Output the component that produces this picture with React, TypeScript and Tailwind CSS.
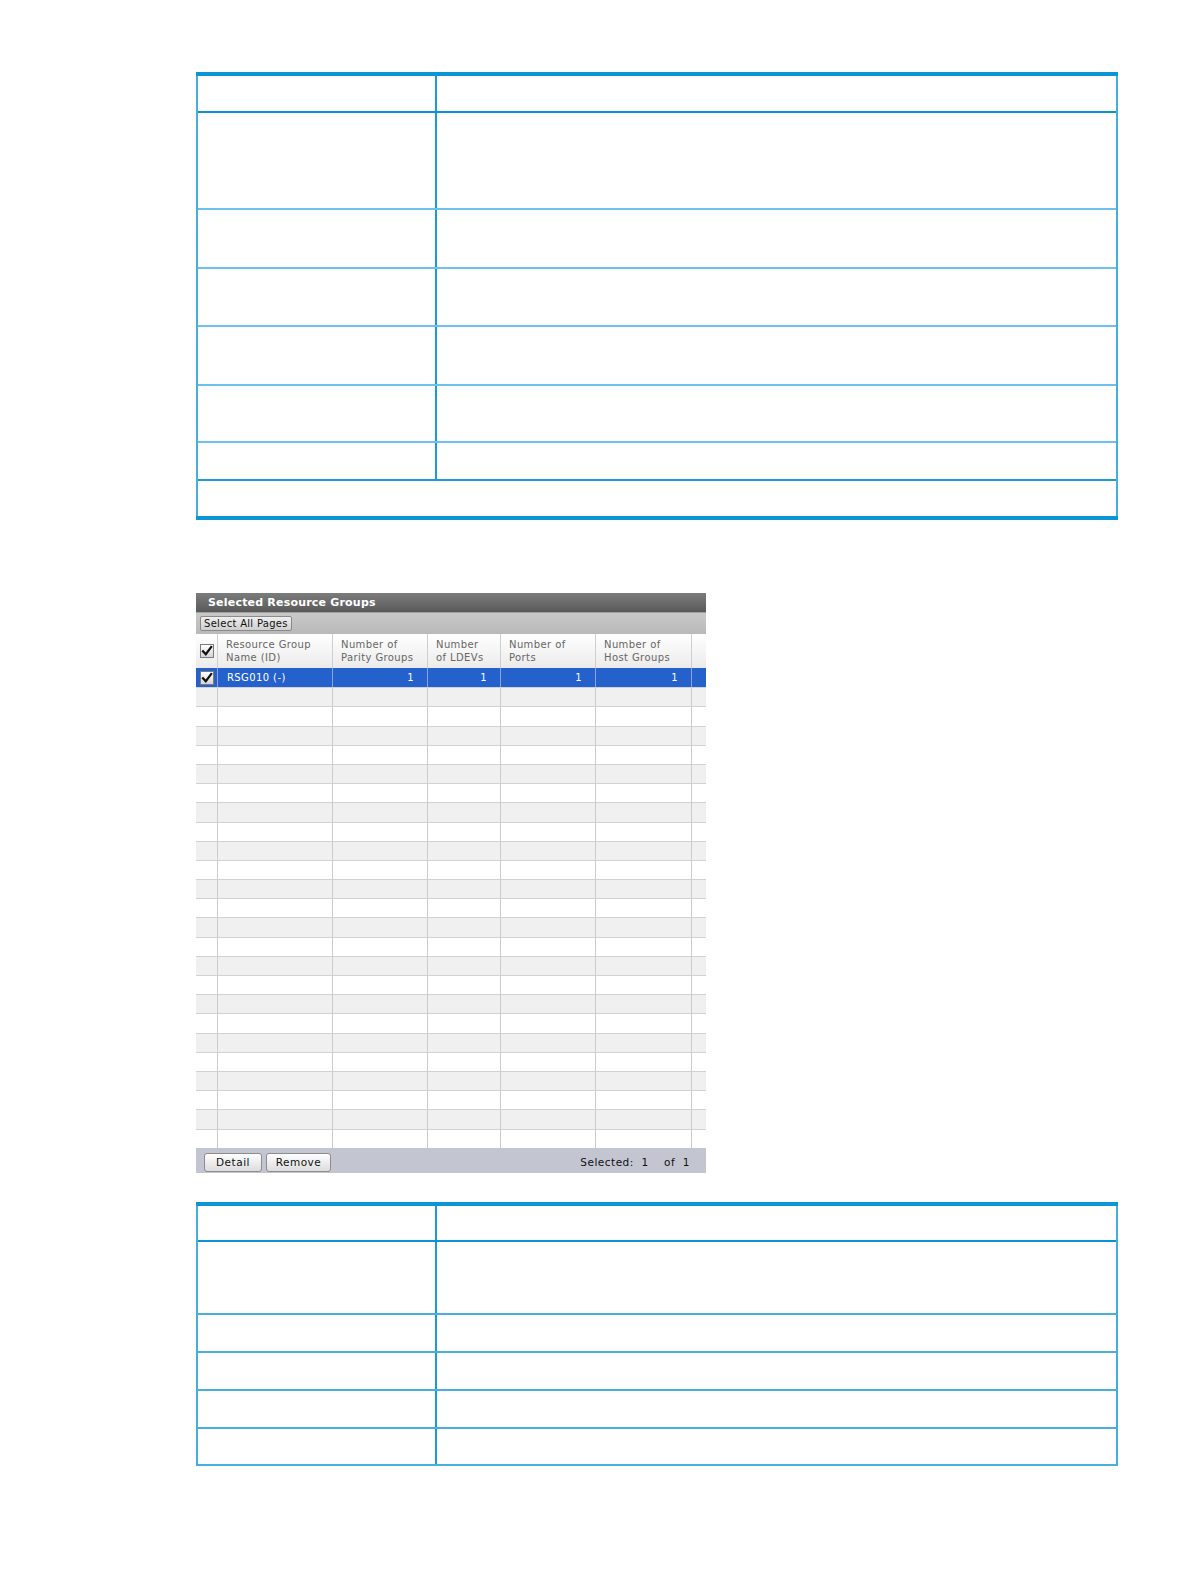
import React from "react";

const ui = "font-['DejaVu_Sans','Liberation_Sans',sans-serif]";

function Check() {
  return (
    <div className="w-[14px] h-[14px] border border-[#7b7b7b] bg-gradient-to-b from-white to-[#d4d4d4] flex items-center justify-center">
      <svg width="12" height="12" viewBox="0 0 12 12">
        <path d="M2 6.2 L4.8 9.2 L10.2 2" fill="none" stroke="#111" strokeWidth="2.2" strokeLinecap="square" />
      </svg>
    </div>
  );
}

const cols = "grid grid-cols-[22px_115px_95px_73px_95px_96px_14px]";

function ResourcePanel() {
  const rows = Array.from({ length: 24 }, (_, i) => i);
  return (
    <div className={`w-[510px] ${ui}`}>
      <div className="h-[19px] bg-gradient-to-b from-[#7c7c7c] to-[#5a5a5a] flex items-center pl-[12px]">
        <span className="text-[11px] font-bold text-white tracking-[0.2px] leading-none">Selected Resource Groups</span>
      </div>
      <div className="h-[22px] bg-gradient-to-b from-[#c9c9c9] to-[#b9b9b9] border-t border-[#a0a0a0] flex items-center pl-[4px]">
        <div className="h-[15px] px-[3px] border border-[#8a8a8a] rounded-[2px] bg-gradient-to-b from-[#eeeeee] to-[#cfcfcf] text-[10px] leading-[13px] text-[#111] tracking-[0.3px]">
          Select All Pages
        </div>
      </div>
      <div className={`${cols} h-[34px] bg-gradient-to-b from-white to-[#ebebeb] text-[10px] leading-[13px] text-[#666] tracking-[0.4px]`}>
        <div className="border-r border-[#cfcfcf] flex items-center justify-center">
          <Check />
        </div>
        <div className="border-r border-[#cfcfcf] pl-2 pt-[4px]">Resource Group<br />Name (ID)</div>
        <div className="border-r border-[#cfcfcf] pl-2 pt-[4px]">Number of<br />Parity Groups</div>
        <div className="border-r border-[#cfcfcf] pl-2 pt-[4px]">Number<br />of LDEVs</div>
        <div className="border-r border-[#cfcfcf] pl-2 pt-[4px]">Number of<br />Ports</div>
        <div className="border-r border-[#cfcfcf] pl-2 pt-[4px]">Number of<br />Host Groups</div>
        <div />
      </div>
      <div className={`${cols} h-[19.2px] bg-[#2461cc] text-[10px] text-white tracking-[0.4px] leading-none`}>
        <div className="border-r border-[#8aa6d8] flex items-center justify-center">
          <Check />
        </div>
        <div className="border-r border-[#8aa6d8] pl-[9px] flex items-center">RSG010 (-)</div>
        <div className="border-r border-[#8aa6d8] pr-[13px] flex items-center justify-end">1</div>
        <div className="border-r border-[#8aa6d8] pr-[13px] flex items-center justify-end">1</div>
        <div className="border-r border-[#8aa6d8] pr-[13px] flex items-center justify-end">1</div>
        <div className="border-r border-[#8aa6d8] pr-[13px] flex items-center justify-end">1</div>
        <div />
      </div>
      {rows.map((i) => (
        <div key={i} className={`${cols} h-[19.2px] ${i % 2 === 0 ? "bg-[#f0f0f0]" : "bg-white"}`}>
          {[0, 1, 2, 3, 4, 5, 6].map((c) => (
            <div key={c} className={`border-t border-[#d2d2d2] ${c < 6 ? "border-r" : ""} border-r-[#cccccc]`} />
          ))}
        </div>
      ))}
      <div className="h-[25px] bg-[#c3c6d1] flex items-center pl-[8px] pr-[16px] pt-[5px] text-[10.5px] text-[#111] tracking-[0.5px]">
        <div className="w-[58px] h-[19px] border border-[#8c8c8c] rounded-[3px] bg-gradient-to-b from-white to-[#dcdcdc] flex items-center justify-center">Detail</div>
        <div className="w-[65px] h-[19px] ml-[4px] border border-[#8c8c8c] rounded-[3px] bg-gradient-to-b from-white to-[#dcdcdc] flex items-center justify-center">Remove</div>
        <div className="ml-auto whitespace-pre">Selected:  1    of  1</div>
      </div>
    </div>
  );
}

function DocTableTop() {
  const rows = [97, 59, 58, 59, 57];
  return (
    <div className="w-[922px] border-t-4 border-b-4 border-[#0a96d5]">
      <div className="border-x-2 border-[#46addf]">
        <div className="h-[37px] flex border-b-2 border-[#0b93d1]">
          <div className="w-[239px] border-r-2 border-[#1a9bd7]" />
          <div className="flex-1" />
        </div>
        {rows.map((h, i) => (
          <div key={i} className="flex border-b-2 border-[#6cc2ea]" style={{ height: h }}>
            <div className="w-[239px] border-r-2 border-[#1a9bd7]" />
            <div className="flex-1" />
          </div>
        ))}
        <div className="h-[38px] flex border-b-2 border-[#1f9ad5]">
          <div className="w-[239px] border-r-2 border-[#1a9bd7]" />
          <div className="flex-1" />
        </div>
        <div className="h-[35px]" />
      </div>
    </div>
  );
}

function DocTableBottom() {
  const rows = [73, 38, 38, 38, 37];
  return (
    <div className="w-[922px] border-t-4 border-[#0a96d5]">
      <div className="border-x-2 border-[#46addf]">
        <div className="h-[36px] flex border-b-2 border-[#0b93d1]">
          <div className="w-[239px] border-r-2 border-[#1a9bd7]" />
          <div className="flex-1" />
        </div>
        {rows.map((h, i) => (
          <div key={i} className="flex border-b-2 border-[#49afe0]" style={{ height: h }}>
            <div className="w-[239px] border-r-2 border-[#1a9bd7]" />
            <div className="flex-1" />
          </div>
        ))}
      </div>
    </div>
  );
}

export default function App() {
  return (
    <div className="w-[1189px] min-h-[1584px] bg-white pt-[72px] pl-[196px]">
      <DocTableTop />
      <div className="mt-[73px]">
        <ResourcePanel />
      </div>
      <div className="mt-[29px]">
        <DocTableBottom />
      </div>
    </div>
  );
}
